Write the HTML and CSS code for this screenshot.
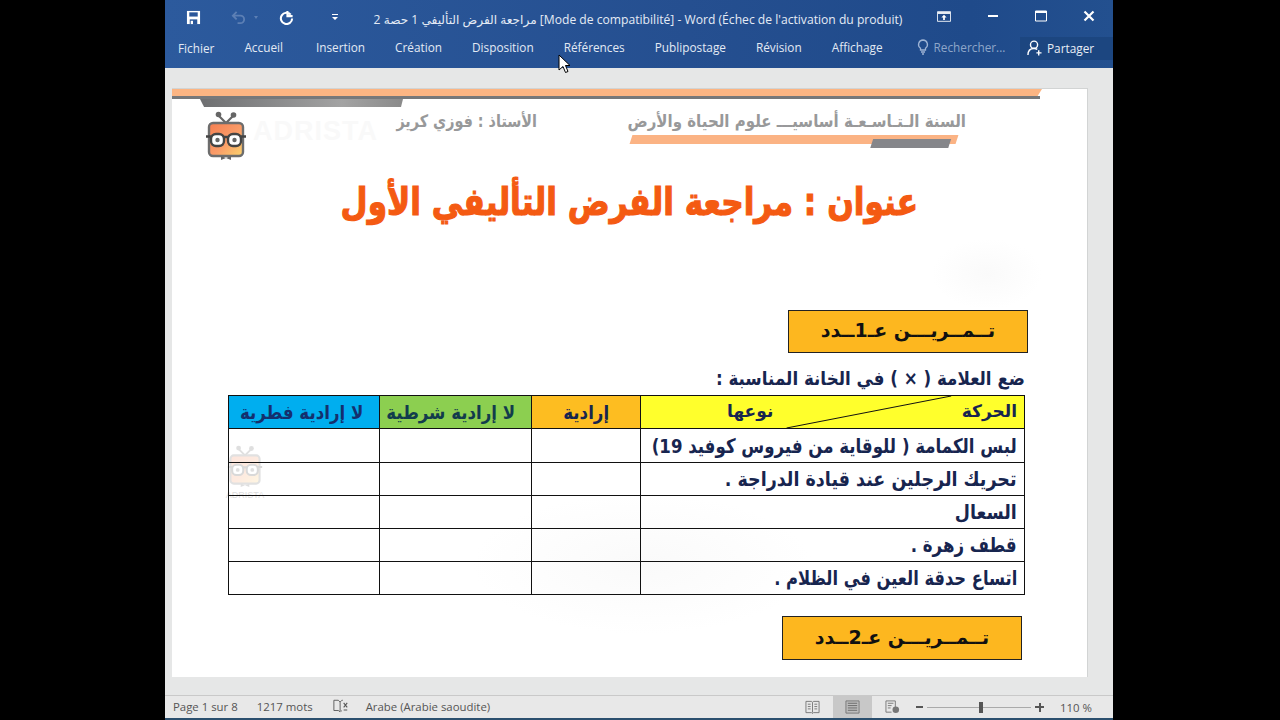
FILE: index.html
```html
<!DOCTYPE html>
<html lang="fr">
<head>
<meta charset="utf-8">
<title>Word</title>
<link rel="stylesheet" href="styles.css">
</head>
<body>
<div class="window">
  <header class="ribbon">
    <div class="titlebar">
      <div class="qat">
        <svg class="ic save" viewBox="0 0 16 16"><path d="M1 1h14v14H1z" fill="#fff"/><path d="M3.500 2.500h9v4.500h-9z" fill="#2b579a"/><path d="M4 10h8v5H4z" fill="#2b579a"/><path d="M5 11.500h2.500V15H5z" fill="#fff"/></svg>
        <svg class="ic undo" viewBox="0 0 16 16"><path d="M6 2 2 6l4 4M2.500 6H10a4 4 0 0 1 0 8H7" fill="none" stroke="#5c7fb4" stroke-width="2"/></svg>
        <span class="caret dim"></span>
        <svg class="ic redo" viewBox="0 0 16 16"><path d="M9 1v5.500h5.500M12.500 5A6 6 0 1 0 14 9" fill="none" stroke="#fff" stroke-width="2.200"/></svg>
        <svg class="ic more" viewBox="0 0 8 8"><path d="M1 1h6v1H1zM1 4h6L4 7z" fill="#fff"/></svg>
      </div>
      <div class="doc-title">مراجعة الفرض التأليفي 1 حصة 2 <span dir="ltr">[Mode de compatibilité] - Word (Échec de l'activation du produit)</span></div>
      <div class="winbtns">
        <svg class="wb restore" viewBox="0 0 16 12"><path d="M.5.500h15v11H.5z" fill="none" stroke="#fff"/><path d="M1 1h14v2H1z" fill="#fff"/><path d="M8 4 5 7h2v3h2V7h2z" fill="#fff"/></svg>
        <svg class="wb" viewBox="0 0 12 12"><path d="M1 5h10v2H1z" fill="#fff"/></svg>
        <svg class="wb" viewBox="0 0 12 12"><path d="M.5 1h11v10H.5z" fill="none" stroke="#fff"/><path d="M1 1h10v2H1z" fill="#fff"/></svg>
        <svg class="wb" viewBox="0 0 12 12"><path d="M1.500 1.500l9 9M10.500 1.500l-9 9" stroke="#fff" stroke-width="2.200"/></svg>
      </div>
    </div>
    <nav class="tabs">
      <span class="tab t-fichier">Fichier</span>
      <span class="tab t-accueil">Accueil</span>
      <span class="tab">Insertion</span>
      <span class="tab">Création</span>
      <span class="tab">Disposition</span>
      <span class="tab">Références</span>
      <span class="tab">Publipostage</span>
      <span class="tab">Révision</span>
      <span class="tab t-affichage">Affichage</span>
      <span class="tab search">
        <svg class="bulb" viewBox="0 0 12 16"><path d="M6 1a4.500 4.500 0 0 0-2.500 8.200V11h5V9.200A4.500 4.500 0 0 0 6 1zM4 13h4M5 15h2" fill="none" stroke="#9db3d4" stroke-width="1.300"/></svg>
        Rechercher...
      </span>
      <span class="share">
        <svg class="person" viewBox="0 0 16 17"><circle cx="7.500" cy="5" r="3.800" fill="none" stroke="#fff" stroke-width="1.500"/><path d="M1 16c0-4.500 2.500-7 6.500-7 1.500 0 2.500.4 3.500 1M12.500 11v5.500M10 13.700h5.500" fill="none" stroke="#fff" stroke-width="1.500"/></svg>
        Partager
      </span>
    </nav>
    <svg class="cursor" viewBox="0 0 13 20"><path d="M1 1v15l4-3.500 2.500 6 2.500-1-2.500-6H12z" fill="#fff" stroke="#000"/></svg>
  </header>

  <main class="workspace">
    <svg class="defs" width="0" height="0" aria-hidden="true">
      <symbol id="mascot" viewBox="0 0 42 50">
        <defs><linearGradient id="mg" x1="0" y1="0" x2="1" y2="1"><stop offset="0" stop-color="#f57f52"/><stop offset=".55" stop-color="#fa9c68"/><stop offset="1" stop-color="#fbd56e"/></linearGradient></defs>
        <path d="M21 12 14 5M21 12l7-7" stroke="#666" stroke-width="2.200"/>
        <circle cx="13.500" cy="3.500" r="2.800" fill="#666"/><circle cx="28.500" cy="4" r="2.800" fill="#666"/>
        <rect x="4" y="12" width="34" height="33" rx="4" fill="url(#mg)" stroke="#6d6d6d" stroke-width="2.400"/>
        <rect x="6" y="23" width="13" height="12" rx="5" fill="#fff" stroke="#444" stroke-width="2.400"/>
        <rect x="23" y="23" width="13" height="12" rx="5" fill="#fff" stroke="#444" stroke-width="2.400"/>
        <path d="M18 26h6M1 25.500h5M36 25.500h5" stroke="#444" stroke-width="2.400"/>
        <circle cx="12.500" cy="29" r="2.200" fill="#666"/><circle cx="29.500" cy="29" r="2.200" fill="#666"/>
        <path d="M16 45l5 2 5-2v4l-5-2-5 2z" fill="#666"/>
      </symbol>
    </svg>
    <article class="page">
      <div class="band">
        <div class="band-orange"></div>
        <div class="band-dark"></div>
        <div class="band-tab"></div>
      </div>

      <div class="head-row">
        <div class="mascot">
          <svg width="42" height="50"><use href="#mascot"/></svg>
          <span class="brand">ADRISTA</span>
        </div>
        <div class="teacher" dir="rtl">الأستاذ : فوزي كريز</div>
        <div class="class-info">
          <div class="class-text" dir="rtl">السنة الـتـاسـعـة أساسيـــ علوم الحياة والأرض</div>
          <div class="class-bar"><div class="class-bar-dark"></div></div>
        </div>
      </div>

      <h1 class="main-title" dir="rtl">عنوان : مراجعة الفرض التأليفي الأول</h1>

      <div class="exercise ex1" dir="rtl">تــمــريـــن عـ1ــدد</div>
      <p class="instruction" dir="rtl">ضع العلامة ( × ) في الخانة المناسبة :</p>

      <div class="table-wrap">
        <div class="ghost">
          <svg width="36" height="43"><use href="#mascot"/></svg>
          <span class="ghost-label">ADRISTA</span>
        </div>
        <table class="grid" dir="rtl">
          <colgroup><col class="c1"><col class="c2"><col class="c3"><col class="c4"></colgroup>
          <tr class="hrow">
            <th class="h-yellow">
              <div class="diag-cell">
                <svg class="diag" viewBox="0 0 100 100" preserveAspectRatio="none"><path d="M38 100 81 0" stroke="#111" stroke-width="1" vector-effect="non-scaling-stroke" fill="none"/></svg>
                <span class="d-label">الحركة</span><span class="d-label">نوعها</span>
              </div>
            </th>
            <th class="h-amber"><span class="hfit">إرادية</span></th>
            <th class="h-green"><span class="hfit">لا إرادية شرطية</span></th>
            <th class="h-blue"><span class="hfit">لا إرادية فطرية</span></th>
          </tr>
          <tr class="row-tall"><td><span class="fit fit-a">لبس الكمامة ( للوقاية من فيروس كوفيد 19)</span></td><td></td><td></td><td></td></tr>
          <tr><td><span class="fit">تحريك الرجلين عند قيادة الدراجة .</span></td><td></td><td></td><td></td></tr>
          <tr><td><span class="fit">السعال</span></td><td></td><td></td><td></td></tr>
          <tr><td><span class="fit fit-a">قطف زهرة .</span></td><td></td><td></td><td></td></tr>
          <tr><td><span class="fit fit-b">اتساع حدقة العين في الظلام .</span></td><td></td><td></td><td></td></tr>
        </table>
      </div>

      <div class="exercise ex2" dir="rtl">تــمــريـــن عـ2ــدد</div>
    </article>
  </main>

  <footer class="status">
    <div class="st-left">
      <span>Page 1 sur 8</span>
      <span>1217 mots</span>
      <svg class="st-book" viewBox="0 0 18 16"><path d="M1 1h5l2 2v11l-2-1.500H1zM8 3l2-2h1M10 13h-1" fill="none" stroke="#555"/><path d="M12 4l4 5M16 4l-4 5M12 12h4" stroke="#555" stroke-width="1.200"/></svg>
      <span>Arabe (Arabie saoudite)</span>
    </div>
    <div class="st-right">
      <svg class="view" viewBox="0 0 16 14"><path d="M1 1h6l1 1 1-1h6v12H9l-1 1-1-1H1zM8 2v11M3 4h3M3 6.500h3M3 9h3M10 4h3M10 6.500h3M10 9h3" fill="none" stroke="#777"/></svg>
      <span class="view-on"><svg class="view" viewBox="0 0 16 14"><path d="M1 .5h14v13H1z" fill="#bdbdbd" stroke="#777"/><path d="M3 3h10M3 5.500h10M3 8h10M3 10.500h10" stroke="#666"/></svg></span>
      <svg class="view" viewBox="0 0 16 14"><path d="M1 .5h10v7M1 .5v12h6M3 3h6M3 5.500h4M3 8h3" fill="none" stroke="#777"/><circle cx="11.500" cy="10" r="3.500" fill="#777"/></svg>
      <span class="zoom-minus"></span>
      <span class="slider"><span class="thumb"></span></span>
      <span class="zoom-plus"></span>
      <span class="pct">110 %</span>
    </div>
  </footer>
  <div class="edge"></div>
</div>
</body>
</html>
```
FILE: styles.css
```css
* { box-sizing: border-box; }
html, body { margin: 0; height: 100%; background: #000; overflow: hidden; }
body { font-family: "Open Sans", "Noto Sans", "DejaVu Sans", sans-serif; }
.window { width: 948px; height: 720px; margin-left: 165px; display: flex; flex-direction: column; background: #e6e7e7; }
.defs { position: absolute; }

.ribbon { position: relative; height: 68px; background: linear-gradient(90deg, #2c5a9d, #254f90 55%, #1f4a8a 85%, #23508f); color: #fff; flex: none; }
.titlebar { height: 34px; display: flex; align-items: center; padding-left: 21px; }
.qat { display: flex; align-items: center; width: 187px; flex: none; }
.ic { display: block; }
.save { width: 15px; height: 15px; }
.undo { width: 15px; height: 15px; margin-left: 30px; }
.caret { width: 0; height: 0; border: 2px solid transparent; border-top: 3px solid #5c7fb4; margin: 2px 0 0 8px; }
.redo { width: 15px; height: 15px; margin-left: 21px; }
.more { width: 8px; height: 8px; margin-left: 37px; }
.doc-title { width: 530px; flex: none; padding-top: 4px; text-align: center; font-size: 12.13px; color: #e4ebf5; white-space: nowrap; }
.winbtns { display: flex; align-items: center; margin-left: 34px; margin-bottom: 2px; gap: 36px; }
.wb { width: 12px; height: 12px; display: block; }
.wb.restore { width: 14px; height: 11px; }

.tabs { height: 34px; display: flex; align-items: flex-start; padding-left: 13px; font-size: 11.8px; color: #e3eaf4; }
.tab { padding-top: 5px; margin-right: 30px; line-height: 16px; white-space: nowrap; }
.t-fichier { padding-top: 6px; }
.t-accueil { margin-right: 33px; }
.t-affichage { margin-right: 34px; }
.search { display: flex; align-items: center; gap: 5px; color: #8ea6c9; margin-right: 0; }
.bulb { width: 12px; height: 16px; }
.share { margin-top: 3px; margin-left: auto; width: 93px; height: 23px; padding: 0 0 2px 7px; background: #1c4680; display: flex; align-items: center; gap: 5px; color: #e9eef6; white-space: nowrap; }
.person { width: 15px; height: 16px; flex: none; }
.cursor { position: absolute; left: 393px; top: 54px; width: 13px; height: 20px; z-index: 3; }

.workspace { flex: 1; min-height: 0; padding: 20px 25px 18px 7px; overflow: hidden; }
.page { height: 100%; padding-left: 1px; border: 1px solid #d2d4d4; border-left: 0; border-bottom: 0; overflow: hidden;
  background:
    radial-gradient(ellipse 55px 35px at 815px 185px, #fafafa, transparent),
    radial-gradient(ellipse 170px 70px at 470px 475px, #fafafa, transparent),
    #fff; }

.band { height: 22px; margin-left: -1px; }
.band-orange { width: 870px; height: 7px; background: #fcb583; clip-path: polygon(0 0, 100% 0, 99.500% 100%, 0 100%); }
.band-dark { width: 868px; height: 3px; background: #77787a; }
.band-tab { width: 203px; height: 8px; margin-left: 28px; background: linear-gradient(90deg, #6e6f71, #a3a3a3 70%, #8a8a8a); clip-path: polygon(0 0, 100% 0, 99% 100%, 2% 100%); }

.head-row { height: 52px; display: flex; align-items: flex-start; }
.mascot { width: 223px; padding-left: 32px; display: flex; position: relative; flex: none; }
.brand { position: absolute; left: 80px; top: 5px; font-family: "Liberation Sans", sans-serif; font-weight: 700; font-size: 27px; letter-spacing: 1px; color: #f9f9f9; }
.teacher { width: 141px; flex: none; margin-top: -1px; text-align: right; font-family: "DejaVu Sans", serif; font-weight: 700; font-size: 17px; line-height: 22px; color: #98999a; white-space: nowrap; transform: scaleX(.845); transform-origin: 100% 50%; }
.class-info { margin-left: 90px; width: 340px; flex: none; margin-top: -1px; }
.class-text { width: 339px; text-align: right; font-family: "DejaVu Sans", serif; font-weight: 700; font-size: 17px; line-height: 22px; color: #98999a; white-space: nowrap; transform: scaleX(.884); transform-origin: 100% 50%; }
.class-bar { margin: 3px 0 0 4px; width: 326px; height: 9px; background: #fbb384; transform: skewX(-18deg); }
.class-bar-dark { width: 78px; height: 9px; margin-left: 242px; position: relative; top: 4px; background: #85868a; }

.main-title { margin: 14px 0 0 0; width: 745px; text-align: right; font-family: "DejaVu Sans", sans-serif; font-weight: 700; font-size: 38px; line-height: 50px; color: #f45a12; white-space: nowrap; -webkit-text-stroke: 1.200px #f45a12; transform: scaleX(.82); transform-origin: 100% 50%; }

.exercise { font-family: "DejaVu Sans", serif; font-weight: 700; font-size: 19px; color: #111; background: #fdb71f; border: 1px solid #222; text-align: center; white-space: nowrap; }
.ex1 { width: 240px; height: 43px; line-height: 39px; margin: 83px 0 0 615px; }
.ex2 { width: 240px; height: 44px; line-height: 40px; margin: 21px 0 0 609px; }

.instruction { margin: 9px 62px 0 0; text-align: right; font-family: "DejaVu Sans", sans-serif; font-weight: 700; font-size: 19px; line-height: 33px; color: #17254f; white-space: nowrap; transform: scaleX(.88); transform-origin: 100% 50%; }

.table-wrap { position: relative; padding: 0 62px 0 55px; }
.ghost { position: absolute; left: 48px; top: 50px; width: 48px; display: flex; flex-direction: column; align-items: center; opacity: .2; }
.ghost-label { font-family: "Liberation Sans", sans-serif; font-size: 9px; line-height: 14px; color: #555; }
.grid { position: relative; width: 796px; border-collapse: collapse; table-layout: fixed; font-family: "DejaVu Sans", sans-serif; font-weight: 700; font-size: 20px; color: #17254f; }
.c1 { width: 384px; } .c2 { width: 109px; } .c3 { width: 152px; } .c4 { width: 151px; }
.grid td, .grid th { border: 1px solid #111; height: 33px; padding: 0 7px; text-align: right; white-space: nowrap; line-height: 30px; overflow: hidden; }
.grid .row-tall td { height: 34px; }
.fit { display: inline-block; transform: scaleX(.875); transform-origin: 100% 50%; }
.fit-a { transform: scaleX(.83); }
.fit-b { transform: scaleX(.815); }
.hrow th { font-weight: 700; font-size: 19px; text-align: center; height: 33px; }
.hfit { display: inline-block; transform: scaleX(.874); }
.grid .h-yellow { background: #ffff2c; padding: 0; }
.h-amber { background: #fdbd21; }
.h-green { background: #8ccf50; color: #123c4c; }
.h-blue { background: #00aeef; color: #14306e; }
.diag-cell { position: relative; height: 32px; display: flex; justify-content: space-between; padding: 0 7px 0 86px; }
.diag { position: absolute; left: 0; top: 0; width: 100%; height: 100%; }
.d-label { position: relative; font-size: 17px; }

.status { height: 23px; flex: none; background: #e8e8e8; border-top: 1px solid #c9c9c9; display: flex; justify-content: space-between; align-items: center; padding: 0 21px 0 8px; font-size: 11.4px; color: #555; }
.st-left { display: flex; align-items: center; gap: 19px; white-space: nowrap; margin-bottom: 2px; }
.st-book { width: 16px; height: 15px; margin-left: 1px; margin-right: -2px; }
.st-right { display: flex; align-items: center; height: 100%; }
.view { width: 15px; height: 14px; display: block; }
.view-on { width: 39px; height: 100%; background: #c8c8c8; display: flex; align-items: center; justify-content: center; margin: 0 13px; }
.zoom-minus { width: 7px; height: 2px; background: #555; margin-left: 16px; }
.slider { position: relative; width: 104px; height: 1px; margin-left: 4px; background: #aaa; }
.thumb { position: absolute; left: 52px; top: -5px; width: 4px; height: 11px; background: #555; }
.zoom-plus { position: relative; width: 9px; height: 2px; background: #555; margin-left: 4px; }
.zoom-plus::after { content: ""; position: absolute; left: 3.500px; top: -3.500px; width: 2px; height: 9px; background: #555; }
.pct { margin-left: 16px; white-space: nowrap; }
.edge { height: 2px; background: #2b4f6e; flex: none; }
```
